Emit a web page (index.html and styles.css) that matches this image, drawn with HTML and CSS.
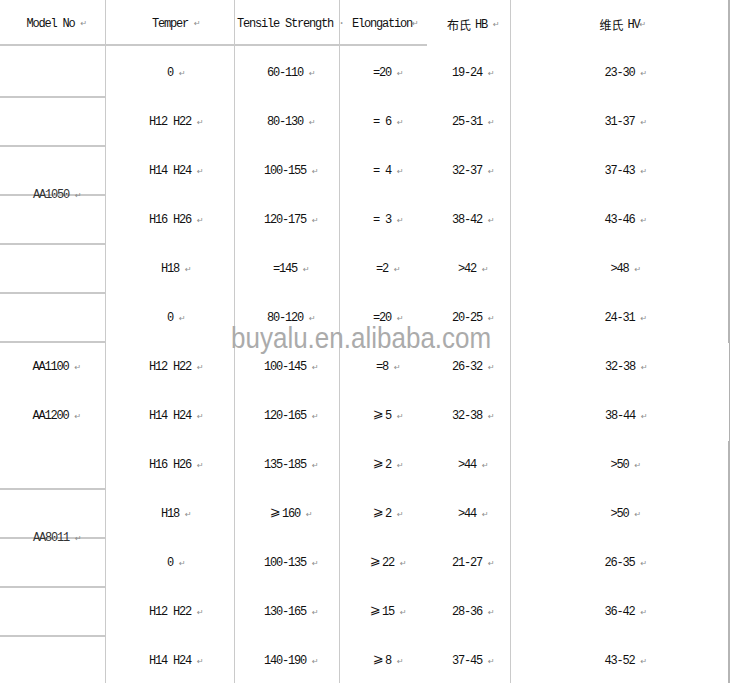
FILE: index.html
```html
<!DOCTYPE html>
<html>
<head>
<meta charset="utf-8">
<title>Aluminium temper table</title>
<link rel="stylesheet" href="styles.css">
</head>
<body>
<div class="sheet">
  <div class="grid">
    <div class="cell hd c1 row1">Model No<span class="pm">↵</span></div>
    <div class="cell hd c2">Temper<span class="pm">↵</span></div>
    <div class="cell hd c3 left">Tensile Strength<span class="dot">·</span></div>
    <div class="cell hd c4">Elongation<span class="pm tight">↵</span></div>
    <div class="cell hd c5"><span class="zh">布氏</span> HB<span class="pm">↵</span></div>
    <div class="cell hd c6"><span class="zh">维氏</span> HV<span class="pm tight">↵</span></div>

    <div class="m row2"></div>
    <div class="m row3"></div>
    <div class="m row4"></div>
    <div class="m row5"></div>
    <div class="m row6"></div>
    <div class="m row7"></div>
    <div class="m rows8to10">
      <div class="mline">AA1100<span class="pm">↵</span></div>
      <div class="mline">AA1200<span class="pm">↵</span></div>
    </div>
    <div class="m row11"></div>
    <div class="m row12"></div>
    <div class="m row13"></div>
    <div class="m row14 last"></div>
    <div class="label over1">AA1050<span class="pm">↵</span></div>
    <div class="label over2">AA8011<span class="pm">↵</span></div>

    <div class="cell c2 first">0<span class="pm">↵</span></div>
    <div class="cell c3 first">60-110<span class="pm">↵</span></div>
    <div class="cell c4 first">=20<span class="pm">↵</span></div>
    <div class="cell c5 first">19-24<span class="pm">↵</span></div>
    <div class="cell c6 first">23-30<span class="pm">↵</span></div>

    <div class="cell c2">H12 H22<span class="pm">↵</span></div>
    <div class="cell c3">80-130<span class="pm">↵</span></div>
    <div class="cell c4">= 6<span class="pm">↵</span></div>
    <div class="cell c5">25-31<span class="pm">↵</span></div>
    <div class="cell c6">31-37<span class="pm">↵</span></div>

    <div class="cell c2">H14 H24<span class="pm">↵</span></div>
    <div class="cell c3">100-155<span class="pm">↵</span></div>
    <div class="cell c4">= 4<span class="pm">↵</span></div>
    <div class="cell c5">32-37<span class="pm">↵</span></div>
    <div class="cell c6">37-43<span class="pm">↵</span></div>

    <div class="cell c2">H16 H26<span class="pm">↵</span></div>
    <div class="cell c3">120-175<span class="pm">↵</span></div>
    <div class="cell c4">= 3<span class="pm">↵</span></div>
    <div class="cell c5">38-42<span class="pm">↵</span></div>
    <div class="cell c6">43-46<span class="pm">↵</span></div>

    <div class="cell c2">H18<span class="pm">↵</span></div>
    <div class="cell c3">=145<span class="pm">↵</span></div>
    <div class="cell c4">=2<span class="pm">↵</span></div>
    <div class="cell c5">&gt;42<span class="pm">↵</span></div>
    <div class="cell c6">&gt;48<span class="pm">↵</span></div>

    <div class="cell c2">0<span class="pm">↵</span></div>
    <div class="cell c3">80-120<span class="pm">↵</span></div>
    <div class="cell c4">=20<span class="pm">↵</span></div>
    <div class="cell c5">20-25<span class="pm">↵</span></div>
    <div class="cell c6">24-31<span class="pm">↵</span></div>

    <div class="cell c2">H12 H22<span class="pm">↵</span></div>
    <div class="cell c3">100-145<span class="pm">↵</span></div>
    <div class="cell c4">=8<span class="pm">↵</span></div>
    <div class="cell c5">26-32<span class="pm">↵</span></div>
    <div class="cell c6 thin">32-38<span class="pm">↵</span></div>

    <div class="cell c2">H14 H24<span class="pm">↵</span></div>
    <div class="cell c3">120-165<span class="pm">↵</span></div>
    <div class="cell c4"><span class="ge">⩾</span>5<span class="pm">↵</span></div>
    <div class="cell c5">32-38<span class="pm">↵</span></div>
    <div class="cell c6 thin">38-44<span class="pm">↵</span></div>

    <div class="cell c2">H16 H26<span class="pm">↵</span></div>
    <div class="cell c3">135-185<span class="pm">↵</span></div>
    <div class="cell c4"><span class="ge">⩾</span>2<span class="pm">↵</span></div>
    <div class="cell c5">&gt;44<span class="pm">↵</span></div>
    <div class="cell c6">&gt;50<span class="pm">↵</span></div>

    <div class="cell c2">H18<span class="pm">↵</span></div>
    <div class="cell c3"><span class="ge">⩾</span>160<span class="pm">↵</span></div>
    <div class="cell c4"><span class="ge">⩾</span>2<span class="pm">↵</span></div>
    <div class="cell c5">&gt;44<span class="pm">↵</span></div>
    <div class="cell c6">&gt;50<span class="pm">↵</span></div>

    <div class="cell c2">0<span class="pm">↵</span></div>
    <div class="cell c3">100-135<span class="pm">↵</span></div>
    <div class="cell c4"><span class="ge">⩾</span>22<span class="pm">↵</span></div>
    <div class="cell c5">21-27<span class="pm">↵</span></div>
    <div class="cell c6">26-35<span class="pm">↵</span></div>

    <div class="cell c2">H12 H22<span class="pm">↵</span></div>
    <div class="cell c3">130-165<span class="pm">↵</span></div>
    <div class="cell c4"><span class="ge">⩾</span>15<span class="pm">↵</span></div>
    <div class="cell c5">28-36<span class="pm">↵</span></div>
    <div class="cell c6">36-42<span class="pm">↵</span></div>

    <div class="cell c2">H14 H24<span class="pm">↵</span></div>
    <div class="cell c3">140-190<span class="pm">↵</span></div>
    <div class="cell c4"><span class="ge">⩾</span>8<span class="pm">↵</span></div>
    <div class="cell c5">37-45<span class="pm">↵</span></div>
    <div class="cell c6">43-52<span class="pm">↵</span></div>
  </div>
  <div class="watermark">buyalu.en.alibaba.com</div>
</div>
</body>
</html>
```
FILE: styles.css
```css
html, body {
  margin: 0;
  padding: 0;
  background: #ffffff;
}

.sheet {
  position: relative;
  width: 730px;
  height: 683px;
  overflow: hidden;
  background: #ffffff;
}

.grid {
  display: grid;
  grid-template-columns: 106px 129px 105px 87px 84px 219px;
  grid-template-rows: 46px 52px repeat(12, 49px);
  font-family: "Liberation Mono", monospace;
  font-size: 12px;
  letter-spacing: -1.2px;
  color: #111111;
}

.cell {
  display: flex;
  align-items: center;
  justify-content: center;
  white-space: pre;
  box-sizing: border-box;
  padding-bottom: 1px;
}

.cell.first {
  padding-top: 3px;
}

.hd {
  padding-bottom: 0;
  padding-top: 3px;
}

.c1 { grid-column: 1; padding-right: 4px; border-right: 1px solid #cacaca; }
.c2 { grid-column: 2; border-right: 1px solid #cacaca; }
.c3 { grid-column: 3; border-right: 1px solid #cacaca; padding-right: 4px; }
.c4 { grid-column: 4; padding-right: 3px; }
.c5 { grid-column: 5; padding-right: 3px; border-right: 1px solid #cacaca; }
.c6 { grid-column: 6; border-right: 2px solid #b5b5b5; }
.c6.thin { border-right: 1px solid #b0b0b0; }

.hd.c1, .hd.c2, .hd.c3, .hd.c4 {
  border-bottom: 2px solid #c9c9c9;
}

.row1 { grid-row: 1; }

.left {
  justify-content: flex-start;
  padding-left: 2px;
  padding-right: 0;
}

.dot {
  margin-left: 5px;
  color: #9a9a9a;
  letter-spacing: 0;
}

.m {
  grid-column: 1;
  box-sizing: border-box;
  border-right: 1px solid #cacaca;
  border-bottom: 2px solid #c9c9c9;
}

.m.last { border-bottom: none; }

.row2 { grid-row: 2; }
.row3 { grid-row: 3; }
.row4 { grid-row: 4; }
.row5 { grid-row: 5; }
.row6 { grid-row: 6; }
.row7 { grid-row: 7; }
.rows8to10 { grid-row: 8 / 11; display: flex; flex-direction: column; }
.row11 { grid-row: 11; }
.row12 { grid-row: 12; }
.row13 { grid-row: 13; }
.row14 { grid-row: 14; }

.mline {
  height: 49px;
  display: flex;
  align-items: center;
  justify-content: center;
  box-sizing: border-box;
  padding-bottom: 1px;
  padding-right: 4px;
  white-space: pre;
}

.label {
  grid-column: 1;
  z-index: 1;
  display: flex;
  align-items: center;
  justify-content: center;
  box-sizing: border-box;
  padding-bottom: 2px;
  padding-right: 4px;
  white-space: pre;
  color: #333333;
}

.over1 { grid-row: 4 / 6; }
.over2 { grid-row: 11 / 13; }

.pm {
  display: inline-block;
  width: 8px;
  margin-left: 6px;
  margin-right: -14px;
  font-family: "DejaVu Sans", sans-serif;
  font-size: 8px;
  letter-spacing: 0;
  color: #8c8c8c;
}

.pm.tight {
  margin-left: 0;
  margin-right: -8px;
}

.zh {
  font-family: "Noto Sans CJK SC", sans-serif;
  font-size: 12px;
  letter-spacing: 0;
  margin-right: -2px;
}

.ge {
  font-family: "DejaVu Sans", sans-serif;
  font-size: 13px;
  line-height: 13px;
  letter-spacing: 0;
  margin-right: 1px;
  margin-bottom: 5px;
}

.watermark {
  position: absolute;
  left: 231px;
  top: 326px;
  font-family: "Liberation Sans", Arial, sans-serif;
  font-size: 26px;
  line-height: 26px;
  color: #ababab;
  transform: scaleY(1.12);
  transform-origin: left bottom;
  white-space: nowrap;
}
```
